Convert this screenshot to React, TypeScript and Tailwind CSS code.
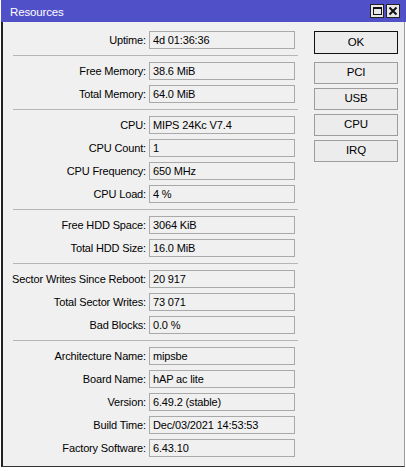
type Row = { label: string; value: string };

const groups: Row[][] = [
  [{ label: 'Uptime', value: '4d 01:36:36' }],
  [
    { label: 'Free Memory', value: '38.6 MiB' },
    { label: 'Total Memory', value: '64.0 MiB' },
  ],
  [
    { label: 'CPU', value: 'MIPS 24Kc V7.4' },
    { label: 'CPU Count', value: '1' },
    { label: 'CPU Frequency', value: '650 MHz' },
    { label: 'CPU Load', value: '4 %' },
  ],
  [
    { label: 'Free HDD Space', value: '3064 KiB' },
    { label: 'Total HDD Size', value: '16.0 MiB' },
  ],
  [
    { label: 'Sector Writes Since Reboot', value: '20 917' },
    { label: 'Total Sector Writes', value: '73 071' },
    { label: 'Bad Blocks', value: '0.0 %' },
  ],
  [
    { label: 'Architecture Name', value: 'mipsbe' },
    { label: 'Board Name', value: 'hAP ac lite' },
    { label: 'Version', value: '6.49.2 (stable)' },
    { label: 'Build Time', value: 'Dec/03/2021 14:53:53' },
    { label: 'Factory Software', value: '6.43.10' },
  ],
];

const buttons = ['PCI', 'USB', 'CPU', 'IRQ'];

function Field({ label, value }: Row) {
  return (
    <div className="flex h-[18px] items-center mb-[5px]">
      <div className="w-[146px] pr-[3px] text-right whitespace-nowrap">{label}:</div>
      <div className="h-[18px] w-[146px] border border-[#a9a9a9] bg-[#f0f0f0] pl-[3px] leading-[16px] whitespace-nowrap overflow-hidden">
        {value}
      </div>
    </div>
  );
}

export default function App() {
  return (
    <div
      className="w-[406px] h-[471px] bg-white pl-[1px] text-[11px] tracking-[-0.15px] text-black"
      style={{ fontFamily: '"Liberation Sans", Arial, sans-serif' }}
    >
      <div className="w-[404px] h-[467px] flex flex-col border-l-2 border-b border-r border-l-[#222] border-b-[#333] border-r-[#9a9a9a] bg-[#f0f0f0]">
        {/* title bar */}
        <div className="h-[22px] -ml-[2px] w-[405px] bg-[#5050c9] flex items-center pl-[9px] pr-[6px]">
          <span className="text-white text-[11.5px] pt-[3px]">Resources</span>
          <div className="ml-auto flex gap-[2px]">
            <div className="w-[14px] h-[14px] bg-[#e8e8e8] border border-[#222] flex items-center justify-center">
              <div className="w-[9px] h-[8px] border border-[#111] border-t-2" />
            </div>
            <div className="w-[14px] h-[14px] bg-[#e8e8e8] border border-[#222] flex items-center justify-center">
              <svg width="10" height="10" viewBox="0 0 10 10">
                <path d="M1.5 1.5 L8.5 8.5 M8.5 1.5 L1.5 8.5" stroke="#111" strokeWidth="2" />
              </svg>
            </div>
          </div>
        </div>

        <div className="flex pt-[9px]">
          {/* form */}
          <div className="flex flex-col w-[295px]">
            {groups.map((g, gi) => (
              <div key={gi}>
                {gi > 0 && <div className="ml-[10px] w-[285px] h-px bg-[#b5b5b5] mt-[1px] mb-[6px]" />}
                {g.map((r) => (
                  <Field key={r.label} {...r} />
                ))}
              </div>
            ))}
          </div>

          {/* buttons */}
          <div className="flex flex-col ml-[16px]">
            <div className="w-[84px] h-[23px] border border-[#111] bg-[#ececec] flex items-center justify-center text-[11.5px]">
              OK
            </div>
            <div className="flex flex-col gap-[4px] mt-[8px]">
              {buttons.map((b) => (
                <div
                  key={b}
                  className="w-[84px] h-[22px] border border-[#9d9d9d] bg-[#ececec] flex items-center justify-center text-[11.5px]"
                >
                  {b}
                </div>
              ))}
            </div>
          </div>
        </div>
      </div>
    </div>
  );
}
